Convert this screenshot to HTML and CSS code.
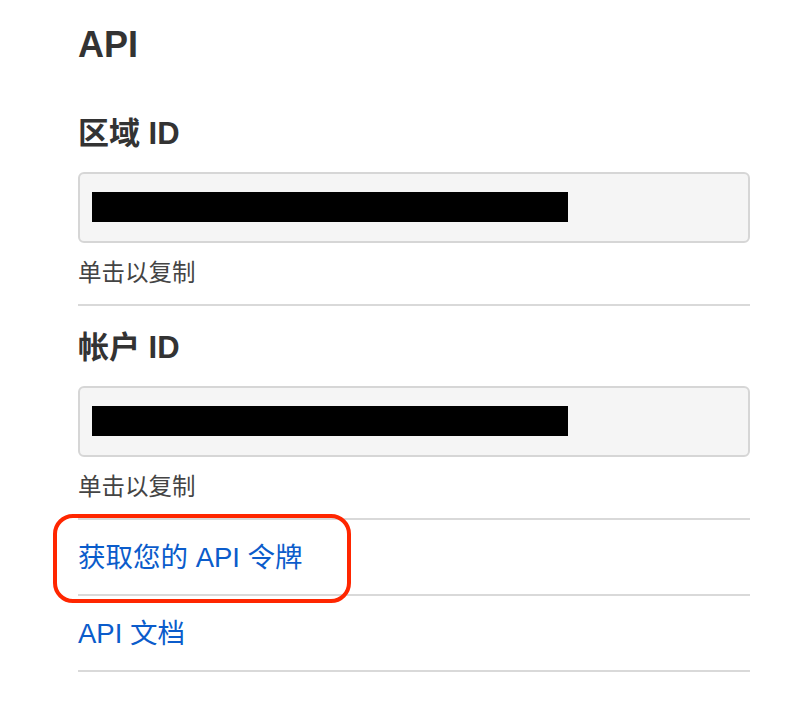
FILE: index.html
```html
<!DOCTYPE html>
<html lang="zh-CN">
<head>
    <meta charset="UTF-8">
    <meta name="viewport" content="width=device-width, initial-scale=1.0">
    <title>API</title>
    <link rel="stylesheet" href="styles.css">
</head>
<body>
    <div class="panel">
        <h1 class="title">API</h1>

        <div class="field">
            <h2 class="field-label">区域 ID</h2>
            <div class="copy-box"><span class="redacted"></span></div>
            <p class="hint">单击以复制</p>
        </div>

        <div class="field">
            <h2 class="field-label">帐户 ID</h2>
            <div class="copy-box"><span class="redacted"></span></div>
            <p class="hint">单击以复制</p>
        </div>

        <div class="link-row highlighted">
            <a href="#" class="link">获取您的 API 令牌</a>
            <span class="annotation"></span>
        </div>
        <div class="link-row">
            <a href="#" class="link">API 文档</a>
        </div>
    </div>
</body>
</html>
```

FILE: styles.css
```css
body {
    margin: 0;
    background-color: #fff;
    font-family: "Liberation Sans", "Noto Sans CJK SC", sans-serif;
    color: #333;
}

.panel {
    width: 672px;
    padding: 23px 0 0 78px;
}

.title {
    margin: 0 0 25px 0;
    font-size: 36px;
    line-height: 44px;
    font-weight: bold;
}

.field {
    padding: 24px 0 17px 0;
    border-bottom: 2px solid #d9d9d9;
}

.field-label {
    margin: 0;
    font-size: 31px;
    line-height: 36px;
    font-weight: bold;
}

.copy-box {
    margin-top: 20px;
    padding: 18px 12px 19px 12px;
    background-color: #f5f5f5;
    border: 2px solid #d6d6d6;
    border-radius: 6px;
}

.redacted {
    display: block;
    width: 476px;
    height: 30px;
    background-color: #000;
}

.hint {
    margin: 16px 0 0 0;
    font-size: 23.5px;
    line-height: 28px;
    color: #444;
}

.link-row {
    padding: 21px 0 19px 0;
    border-bottom: 2px solid #d9d9d9;
    font-size: 27.5px;
    line-height: 34px;
}

.link {
    color: #0b5ccb;
    text-decoration: none;
}

.highlighted {
    position: relative;
}

.annotation {
    position: absolute;
    left: -25px;
    top: -6px;
    width: 290px;
    height: 81px;
    border: 4px solid #ff2600;
    border-radius: 20px;
}
```
